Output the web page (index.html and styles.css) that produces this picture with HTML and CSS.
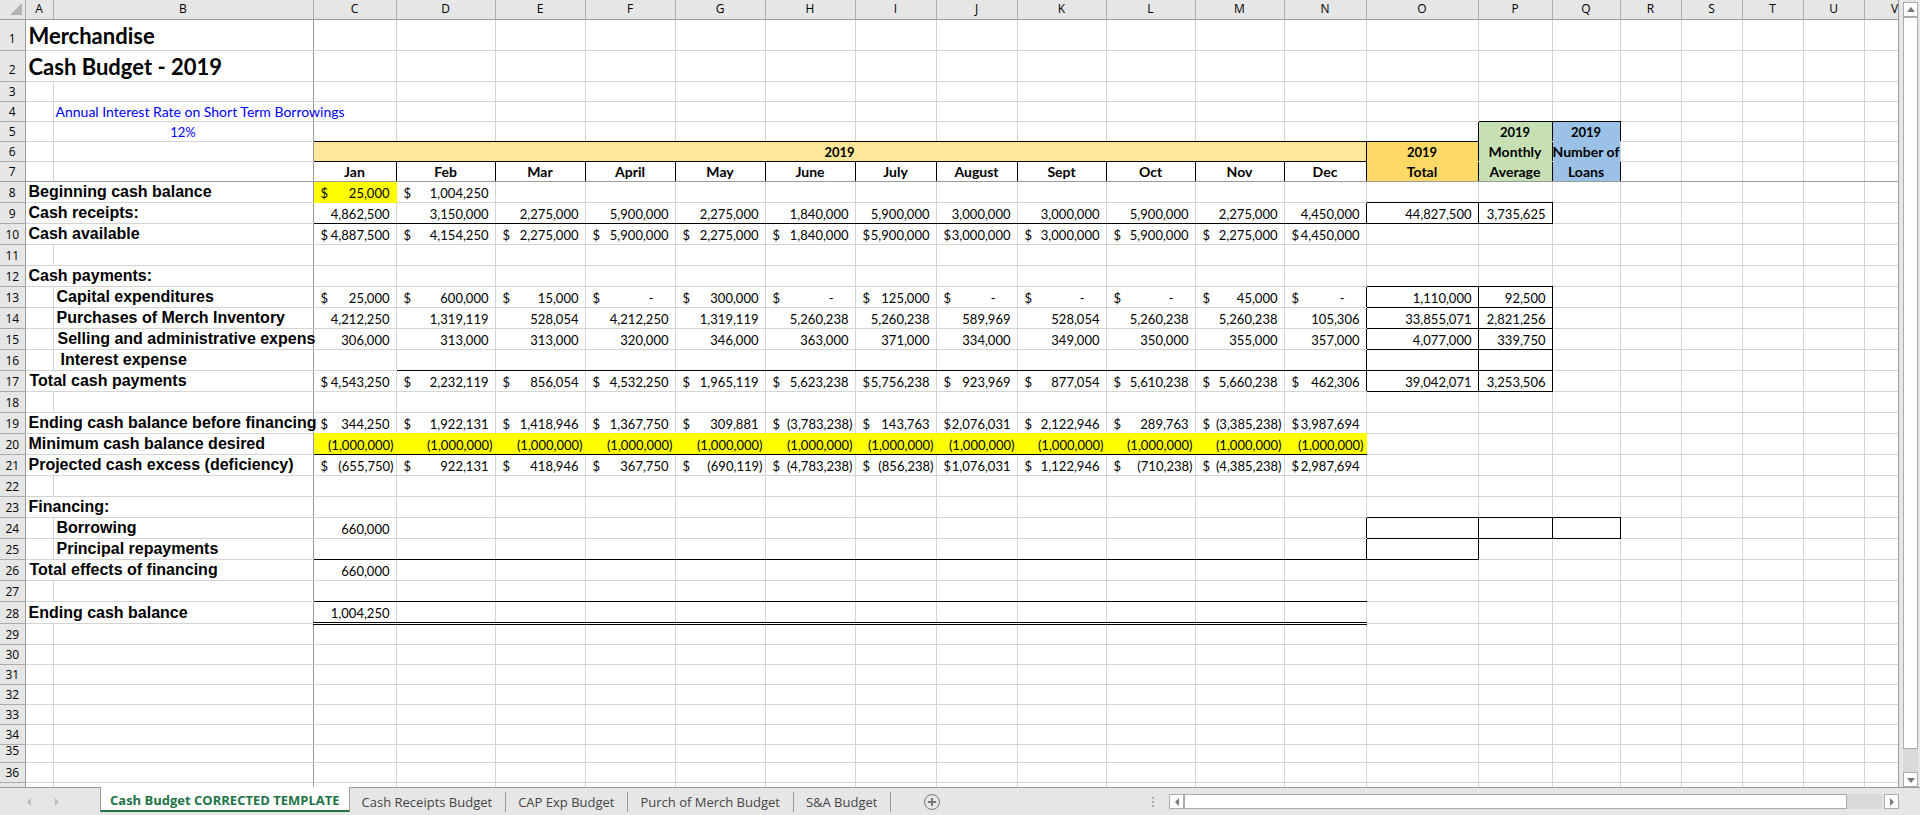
FILE: index.html
```html
<!DOCTYPE html>
<html lang="en">
<head>
<meta charset="utf-8">
<title>Merchandise Cash Budget - 2019</title>
<link rel="stylesheet" href="styles.css">
</head>
<body>
<div class="app">
<main class="main">
<div class="sheet">
<table class="grid">
<colgroup><col class="w-num"><col class="w-a"><col class="w-b"><col class="w-c"><col class="w-d"><col class="w-e" span="4"><col class="w-i" span="2"><col class="w-k" span="3"><col class="w-n"><col class="w-o"><col class="w-p"><col class="w-q"><col class="w-r" span="5"></colgroup>
<thead>
<tr class="cols"><th class="corner"><svg class="corner-icon" viewBox="0 0 12 12"><path d="M12 0V12H0Z"/></svg></th><th>A</th><th class="fz">B</th><th>C</th><th>D</th><th>E</th><th>F</th><th>G</th><th>H</th><th>I</th><th>J</th><th>K</th><th>L</th><th>M</th><th>N</th><th>O</th><th>P</th><th>Q</th><th>R</th><th>S</th><th>T</th><th>U</th><th>V</th></tr>
</thead>
<tbody>
<tr class="tall"><th>1</th><td colspan="2" class="title fz">Merchandise</td><td><td><td><td><td><td><td><td><td><td><td><td><td><td><td><td><td><td><td><td></tr>
<tr class="tall"><th>2</th><td colspan="2" class="title fz">Cash Budget - 2019</td><td><td><td><td><td><td><td><td><td><td><td><td><td><td><td><td><td><td><td><td></tr>
<tr class="low"><th>3</th><td><td class="fz"><td><td><td><td><td><td><td><td><td><td><td><td><td><td><td><td><td><td><td><td></tr>
<tr class="low"><th>4</th><td><td class="fz rate">Annual Interest Rate on Short Term Borrowings</td><td><td><td><td><td><td><td><td><td><td><td><td><td><td class="b"><td class="b"><td><td><td><td><td></tr>
<tr class="low"><th>5</th><td><td class="fz rate mid">12%</td><td class="b"><td class="b"><td class="b"><td class="b"><td class="b"><td class="b"><td class="b"><td class="b"><td class="b"><td class="b"><td class="b"><td class="b"><td class="b r"><td class="head year green r">2019</td><td class="head year blue r">2019</td><td><td><td><td><td></tr>
<tr class="low"><th>6</th><td><td class="fz"><td colspan="12" class="head year cream b r">2019</td><td class="head year gold r">2019</td><td class="head green r">Monthly</td><td class="head blue"><span class="over">Number of</span></td><td><td><td><td><td></tr>
<tr class="low freeze"><th>7</th><td><td class="fz"><td class="head r">Jan</td><td class="head r">Feb</td><td class="head r">Mar</td><td class="head r">April</td><td class="head r">May</td><td class="head r">June</td><td class="head r">July</td><td class="head r">August</td><td class="head r">Sept</td><td class="head r">Oct</td><td class="head r">Nov</td><td class="head r">Dec</td><td class="head gold r">Total</td><td class="head green r">Average</td><td class="head blue r">Loans</td><td><td><td><td><td></tr>
<tr><th>8</th><td colspan="2" class="label fz">Beginning cash balance</td><td class="yellow"><span class="cur">$</span>25,000</td><td><span class="cur">$</span>1,004,250</td><td><td><td><td><td><td><td><td><td><td><td class="b"><td class="b"><td><td><td><td><td><td></tr>
<tr><th>9</th><td colspan="2" class="label fz">Cash receipts:</td><td class="b">4,862,500</td><td class="b">3,150,000</td><td class="b">2,275,000</td><td class="b">5,900,000</td><td class="b">2,275,000</td><td class="b">1,840,000</td><td class="b">5,900,000</td><td class="b">3,000,000</td><td class="b">3,000,000</td><td class="b">5,900,000</td><td class="b">2,275,000</td><td class="b r">4,450,000</td><td class="b r">44,827,500</td><td class="b r">3,735,625</td><td><td><td><td><td><td></tr>
<tr><th>10</th><td colspan="2" class="label fz">Cash available</td><td><span class="cur">$</span>4,887,500</td><td><span class="cur">$</span>4,154,250</td><td><span class="cur">$</span>2,275,000</td><td><span class="cur">$</span>5,900,000</td><td><span class="cur">$</span>2,275,000</td><td><span class="cur">$</span>1,840,000</td><td><span class="cur">$</span>5,900,000</td><td><span class="cur">$</span>3,000,000</td><td><span class="cur">$</span>3,000,000</td><td><span class="cur">$</span>5,900,000</td><td><span class="cur">$</span>2,275,000</td><td><span class="cur">$</span>4,450,000</td><td><td><td><td><td><td><td><td></tr>
<tr><th>11</th><td><td class="fz"><td><td><td><td><td><td><td><td><td><td><td><td><td><td><td><td><td><td><td><td></tr>
<tr><th>12</th><td colspan="2" class="label fz">Cash payments:</td><td><td><td><td><td><td><td><td><td><td><td><td><td class="b"><td class="b"><td><td><td><td><td><td></tr>
<tr><th>13</th><td><td class="label fz">Capital expenditures</td><td><span class="cur">$</span>25,000</td><td><span class="cur">$</span>600,000</td><td><span class="cur">$</span>15,000</td><td class="dash"><span class="cur">$</span>-</td><td><span class="cur">$</span>300,000</td><td class="dash"><span class="cur">$</span>-</td><td><span class="cur">$</span>125,000</td><td class="dash"><span class="cur">$</span>-</td><td class="dash"><span class="cur">$</span>-</td><td class="dash"><span class="cur">$</span>-</td><td><span class="cur">$</span>45,000</td><td class="dash r"><span class="cur">$</span>-</td><td class="b r">1,110,000</td><td class="b r">92,500</td><td><td><td><td><td><td></tr>
<tr><th>14</th><td><td class="label fz">Purchases of Merch Inventory</td><td>4,212,250</td><td>1,319,119</td><td>528,054</td><td>4,212,250</td><td>1,319,119</td><td>5,260,238</td><td>5,260,238</td><td>589,969</td><td>528,054</td><td>5,260,238</td><td>5,260,238</td><td class="r">105,306</td><td class="b r">33,855,071</td><td class="b r">2,821,256</td><td><td><td><td><td><td></tr>
<tr><th>15</th><td><td class="label fz in1">Selling and administrative expens</td><td>306,000</td><td>313,000</td><td>313,000</td><td>320,000</td><td>346,000</td><td>363,000</td><td>371,000</td><td>334,000</td><td>349,000</td><td>350,000</td><td>355,000</td><td class="r">357,000</td><td class="b r">4,077,000</td><td class="b r">339,750</td><td><td><td><td><td><td></tr>
<tr><th>16</th><td><td class="label fz in2">Interest expense</td><td><td class="b"><td class="b"><td class="b"><td class="b"><td class="b"><td class="b"><td class="b"><td class="b"><td class="b"><td class="b"><td class="b r"><td class="b r"><td class="b r"><td><td><td><td><td><td></tr>
<tr><th>17</th><td colspan="2" class="label fz in1">Total cash payments</td><td><span class="cur">$</span>4,543,250</td><td><span class="cur">$</span>2,232,119</td><td><span class="cur">$</span>856,054</td><td><span class="cur">$</span>4,532,250</td><td><span class="cur">$</span>1,965,119</td><td><span class="cur">$</span>5,623,238</td><td><span class="cur">$</span>5,756,238</td><td><span class="cur">$</span>923,969</td><td><span class="cur">$</span>877,054</td><td><span class="cur">$</span>5,610,238</td><td><span class="cur">$</span>5,660,238</td><td class="r"><span class="cur">$</span>462,306</td><td class="b r">39,042,071</td><td class="b r">3,253,506</td><td><td><td><td><td><td></tr>
<tr><th>18</th><td><td class="fz"><td><td><td><td><td><td><td><td><td><td><td><td><td><td><td><td><td><td><td><td></tr>
<tr><th>19</th><td colspan="2" class="label fz">Ending cash balance before financing</td><td class="yb"><span class="cur">$</span>344,250</td><td class="yb"><span class="cur">$</span>1,922,131</td><td class="yb"><span class="cur">$</span>1,418,946</td><td class="yb"><span class="cur">$</span>1,367,750</td><td class="yb"><span class="cur">$</span>309,881</td><td class="yb neg"><span class="cur">$</span>(3,783,238)</td><td class="yb"><span class="cur">$</span>143,763</td><td class="yb"><span class="cur">$</span>2,076,031</td><td class="yb"><span class="cur">$</span>2,122,946</td><td class="yb"><span class="cur">$</span>289,763</td><td class="yb neg"><span class="cur">$</span>(3,385,238)</td><td class="yb"><span class="cur">$</span>3,987,694</td><td><td><td><td><td><td><td><td></tr>
<tr><th>20</th><td colspan="2" class="label fz">Minimum cash balance desired</td><td class="yellow neg b">(1,000,000)</td><td class="yellow neg b">(1,000,000)</td><td class="yellow neg b">(1,000,000)</td><td class="yellow neg b">(1,000,000)</td><td class="yellow neg b">(1,000,000)</td><td class="yellow neg b">(1,000,000)</td><td class="yellow neg b">(1,000,000)</td><td class="yellow neg b">(1,000,000)</td><td class="yellow neg b">(1,000,000)</td><td class="yellow neg b">(1,000,000)</td><td class="yellow neg b">(1,000,000)</td><td class="yellow neg b">(1,000,000)</td><td><td><td><td><td><td><td><td></tr>
<tr><th>21</th><td colspan="2" class="label fz">Projected cash excess (deficiency)</td><td class="neg"><span class="cur">$</span>(655,750)</td><td><span class="cur">$</span>922,131</td><td><span class="cur">$</span>418,946</td><td><span class="cur">$</span>367,750</td><td class="neg"><span class="cur">$</span>(690,119)</td><td class="neg"><span class="cur">$</span>(4,783,238)</td><td class="neg"><span class="cur">$</span>(856,238)</td><td><span class="cur">$</span>1,076,031</td><td><span class="cur">$</span>1,122,946</td><td class="neg"><span class="cur">$</span>(710,238)</td><td class="neg"><span class="cur">$</span>(4,385,238)</td><td><span class="cur">$</span>2,987,694</td><td><td><td><td><td><td><td><td></tr>
<tr><th>22</th><td><td class="fz"><td><td><td><td><td><td><td><td><td><td><td><td><td><td><td><td><td><td><td><td></tr>
<tr><th>23</th><td colspan="2" class="label fz">Financing:</td><td><td><td><td><td><td><td><td><td><td><td><td><td class="b"><td class="b"><td class="b"><td><td><td><td><td></tr>
<tr><th>24</th><td><td class="label fz">Borrowing</td><td>660,000</td><td><td><td><td><td><td><td><td><td><td><td class="r"><td class="b r"><td class="b r"><td class="b r"><td><td><td><td><td></tr>
<tr><th>25</th><td><td class="label fz">Principal repayments</td><td class="b"><td class="b"><td class="b"><td class="b"><td class="b"><td class="b"><td class="b"><td class="b"><td class="b"><td class="b"><td class="b"><td class="b r"><td class="b r"><td><td><td><td><td><td><td></tr>
<tr><th>26</th><td colspan="2" class="label fz in1">Total effects of financing</td><td>660,000</td><td><td><td><td><td><td><td><td><td><td><td><td><td><td><td><td><td><td><td></tr>
<tr><th>27</th><td><td class="fz"><td class="b"><td class="b"><td class="b"><td class="b"><td class="b"><td class="b"><td class="b"><td class="b"><td class="b"><td class="b"><td class="b"><td class="b"><td><td><td><td><td><td><td><td></tr>
<tr class="sum"><th>28</th><td colspan="2" class="label fz">Ending cash balance</td><td class="dbl">1,004,250</td><td class="dbl"><td class="dbl"><td class="dbl"><td class="dbl"><td class="dbl"><td class="dbl"><td class="dbl"><td class="dbl"><td class="dbl"><td class="dbl"><td class="dbl"><td><td><td><td><td><td><td><td></tr>
<tr><th>29</th><td><td class="fz"><td><td><td><td><td><td><td><td><td><td><td><td><td><td><td><td><td><td><td><td></tr>
<tr class="low"><th>30</th><td><td class="fz"><td><td><td><td><td><td><td><td><td><td><td><td><td><td><td><td><td><td><td><td></tr>
<tr class="low"><th>31</th><td><td class="fz"><td><td><td><td><td><td><td><td><td><td><td><td><td><td><td><td><td><td><td><td></tr>
<tr class="low"><th>32</th><td><td class="fz"><td><td><td><td><td><td><td><td><td><td><td><td><td><td><td><td><td><td><td><td></tr>
<tr class="low"><th>33</th><td><td class="fz"><td><td><td><td><td><td><td><td><td><td><td><td><td><td><td><td><td><td><td><td></tr>
<tr class="low"><th>34</th><td><td class="fz"><td><td><td><td><td><td><td><td><td><td><td><td><td><td><td><td><td><td><td><td></tr>
<tr class="short"><th>35</th><td><td class="fz"><td><td><td><td><td><td><td><td><td><td><td><td><td><td><td><td><td><td><td><td></tr>
<tr class="low"><th>36</th><td><td class="fz"><td><td><td><td><td><td><td><td><td><td><td><td><td><td><td><td><td><td><td><td></tr>
<tr class="low"><th></th><td><td class="fz"><td><td><td><td><td><td><td><td><td><td><td><td><td><td><td><td><td><td><td><td></tr>
</tbody>
</table>
</div>
<div class="vscroll">
<button class="sbtn" aria-label="Scroll up"><svg class="arrow" viewBox="0 0 8 8"><path d="M0 6L4 1L8 6Z"/></svg></button>
<div class="vtrack"><div class="vthumb"></div></div>
<button class="sbtn" aria-label="Scroll down"><svg class="arrow" viewBox="0 0 8 8"><path d="M0 2L4 7L8 2Z"/></svg></button>
</div>
</main>
<footer class="foot">
<div class="nav">
<button class="navbtn" aria-label="Previous sheet"><svg class="arrow" viewBox="0 0 8 8"><path d="M6 0L2 4L6 8Z"/></svg></button>
<button class="navbtn" aria-label="Next sheet"><svg class="arrow" viewBox="0 0 8 8"><path d="M2 0L6 4L2 8Z"/></svg></button>
</div>
<button class="tab active">Cash Budget CORRECTED TEMPLATE</button>
<button class="tab">Cash Receipts Budget</button>
<button class="tab">CAP Exp Budget</button>
<button class="tab">Purch of Merch Budget</button>
<button class="tab">S&amp;A Budget</button>
<button class="add" aria-label="New sheet"><svg class="add-icon" viewBox="0 0 18 18"><circle cx="9" cy="9" r="7.5"/><path d="M9 5V13M5 9H13"/></svg></button>
<div class="grip"><i class="dot"></i><i class="dot"></i><i class="dot"></i></div>
<div class="hscroll">
<button class="sbtn" aria-label="Scroll left"><svg class="arrow" viewBox="0 0 8 8"><path d="M6 0L2 4L6 8Z"/></svg></button>
<div class="htrack"><div class="hthumb"></div></div>
<button class="sbtn" aria-label="Scroll right"><svg class="arrow" viewBox="0 0 8 8"><path d="M2 0L6 4L2 8Z"/></svg></button>
</div>
</footer>
</div>
</body>
</html>
```
FILE: styles.css
```css
* { box-sizing: border-box; }
body { margin: 0; background: #e6e6e6; color: #000; font: 13px/18px Lato, Carlito, sans-serif; }
button { margin: 0; padding: 0; border: 0; background: none; font: inherit; color: inherit; }
.app { display: flex; flex-direction: column; height: 100vh; }
.main { display: flex; flex: 1; min-height: 0; }
.sheet { flex: 1; min-width: 0; overflow: hidden; background: #fff; border-right: 1px solid #9b9b9b; }

/* Grid */
.grid { table-layout: fixed; width: 0; border-collapse: collapse; }
.w-num { width: 25px; }
.w-a { width: 28px; }
.w-b { width: 260px; }
.w-c { width: 83px; }
.w-d { width: 99px; }
.w-e { width: 90px; }
.w-i { width: 81px; }
.w-k { width: 89px; }
.w-n { width: 82px; }
.w-o { width: 112px; }
.w-p { width: 74px; }
.w-q { width: 68px; }
.w-r { width: 61px; }
.grid tr { height: 21px; }
.grid .low { height: 20px; }
.grid .cols { height: 19px; }
.grid .tall { height: 31px; }
.grid .sum { height: 22px; }
.grid .short { height: 18px; }
.grid th { padding: 0; background: #e6e6e6; border-right: 1px solid #9b9b9b; border-bottom: 1px solid #ababab; font: 12px/18px "Open Sans", sans-serif; vertical-align: bottom; }
.grid .cols th { border-right-color: #ababab; border-bottom-color: #9b9b9b; vertical-align: middle; }
.grid .tall th { padding-bottom: 2px; }
.grid .short th { line-height: 12px; vertical-align: top; }
.corner-icon { display: block; width: 12px; height: 12px; margin-left: 10px; fill: #b2b2b2; }
.grid td { padding: 0 6px 0 7px; border-right: 1px solid #d4d4d4; border-bottom: 1px solid #d4d4d4; text-align: right; vertical-align: bottom; white-space: nowrap; }
.grid .short td { line-height: 12px; }
.grid .fz { border-right-color: #9b9b9b; }
.grid .title { padding: 0 3px; font-size: 22px; font-weight: 700; line-height: 29px; text-align: left; }
.grid .label { padding: 0 0 0 3px; font: bold 16px/20px "Liberation Sans", Arial, sans-serif; text-align: left; }
.grid .in1 { padding-left: 4px; }
.grid .in2 { padding-left: 7px; }
.grid .rate { padding: 0 2px; color: #00f; font-size: 14px; text-align: left; }
.grid .mid { font-size: 13px; text-align: center; }
.grid .neg { padding-right: 2px; }
.grid .dash { padding-right: 21px; }
.cur { float: left; margin-right: -8px; }
.grid .head { padding: 0; font-size: 14px; font-weight: 700; text-align: center; }
.grid .year { font-size: 13px; }
.cream { background: #ffe699; }
.grid .gold { background: #ffd966; border-bottom-color: #ffd966; }
.grid .green { background: #c6e0b4; border-bottom-color: #c6e0b4; }
.grid .blue { background: #9bc2e6; border-bottom-color: #9bc2e6; }
.over { display: block; margin: 0 -4px; }
.grid .yellow { background: #ff0; border-color: #ff0; }
.grid .yb { border-bottom-color: #ff0; }
.grid .b { border-bottom-color: #000; }
.grid .r { border-right-color: #000; }
.grid .dbl { border-bottom: 3px double #000; }
.grid .freeze td, .grid .freeze th { border-bottom-color: #9b9b9b; }

/* Scroll bars */
.sbtn { display: flex; flex: none; align-items: center; justify-content: center; width: 15px; height: 15px; background: #fff; border: 1px solid #ababab; }
.arrow { width: 8px; height: 8px; fill: #777; }
.vscroll { display: flex; flex-direction: column; flex: none; width: 21px; padding: 2px 2px 0 4px; }
.vtrack { flex: 1; background: #dadada; }
.vthumb { height: 97%; background: #fff; border: 1px solid #ababab; }
.hscroll { display: flex; flex: 0 1 730px; margin-right: 21px; }
.htrack { flex: 1; margin-right: 2px; background: #dadada; }
.hthumb { width: 95%; height: 15px; background: #fff; border: 1px solid #ababab; }

/* Sheet tabs */
.foot { display: flex; flex: none; align-items: center; height: 28px; border-top: 1px solid #9b9b9b; color: #444; font: 13px/18px "Open Sans", sans-serif; }
.nav { display: flex; flex: none; gap: 20px; width: 100px; padding-left: 25px; }
.navbtn { display: flex; }
.nav .arrow { fill: #bbb; }
.tab { flex: none; height: 20px; padding: 0 13px 0 12px; border-right: 1px solid #9b9b9b; white-space: nowrap; }
.active { align-self: flex-start; height: 25px; margin-top: -1px; padding: 2px 9px 0; background: #fff; border-left: 1px solid #9b9b9b; border-bottom: 2px solid #217346; color: #217346; font-weight: 700; }
.add { display: flex; flex: none; margin: 0 auto 0 32px; }
.add-icon { width: 18px; height: 18px; fill: none; stroke: #777; stroke-width: 1; }
.add-icon path { stroke-width: 2; }
.grip { display: flex; flex-direction: column; gap: 2px; margin-right: 15px; }
.dot { width: 2px; height: 2px; background: #ababab; }
```
